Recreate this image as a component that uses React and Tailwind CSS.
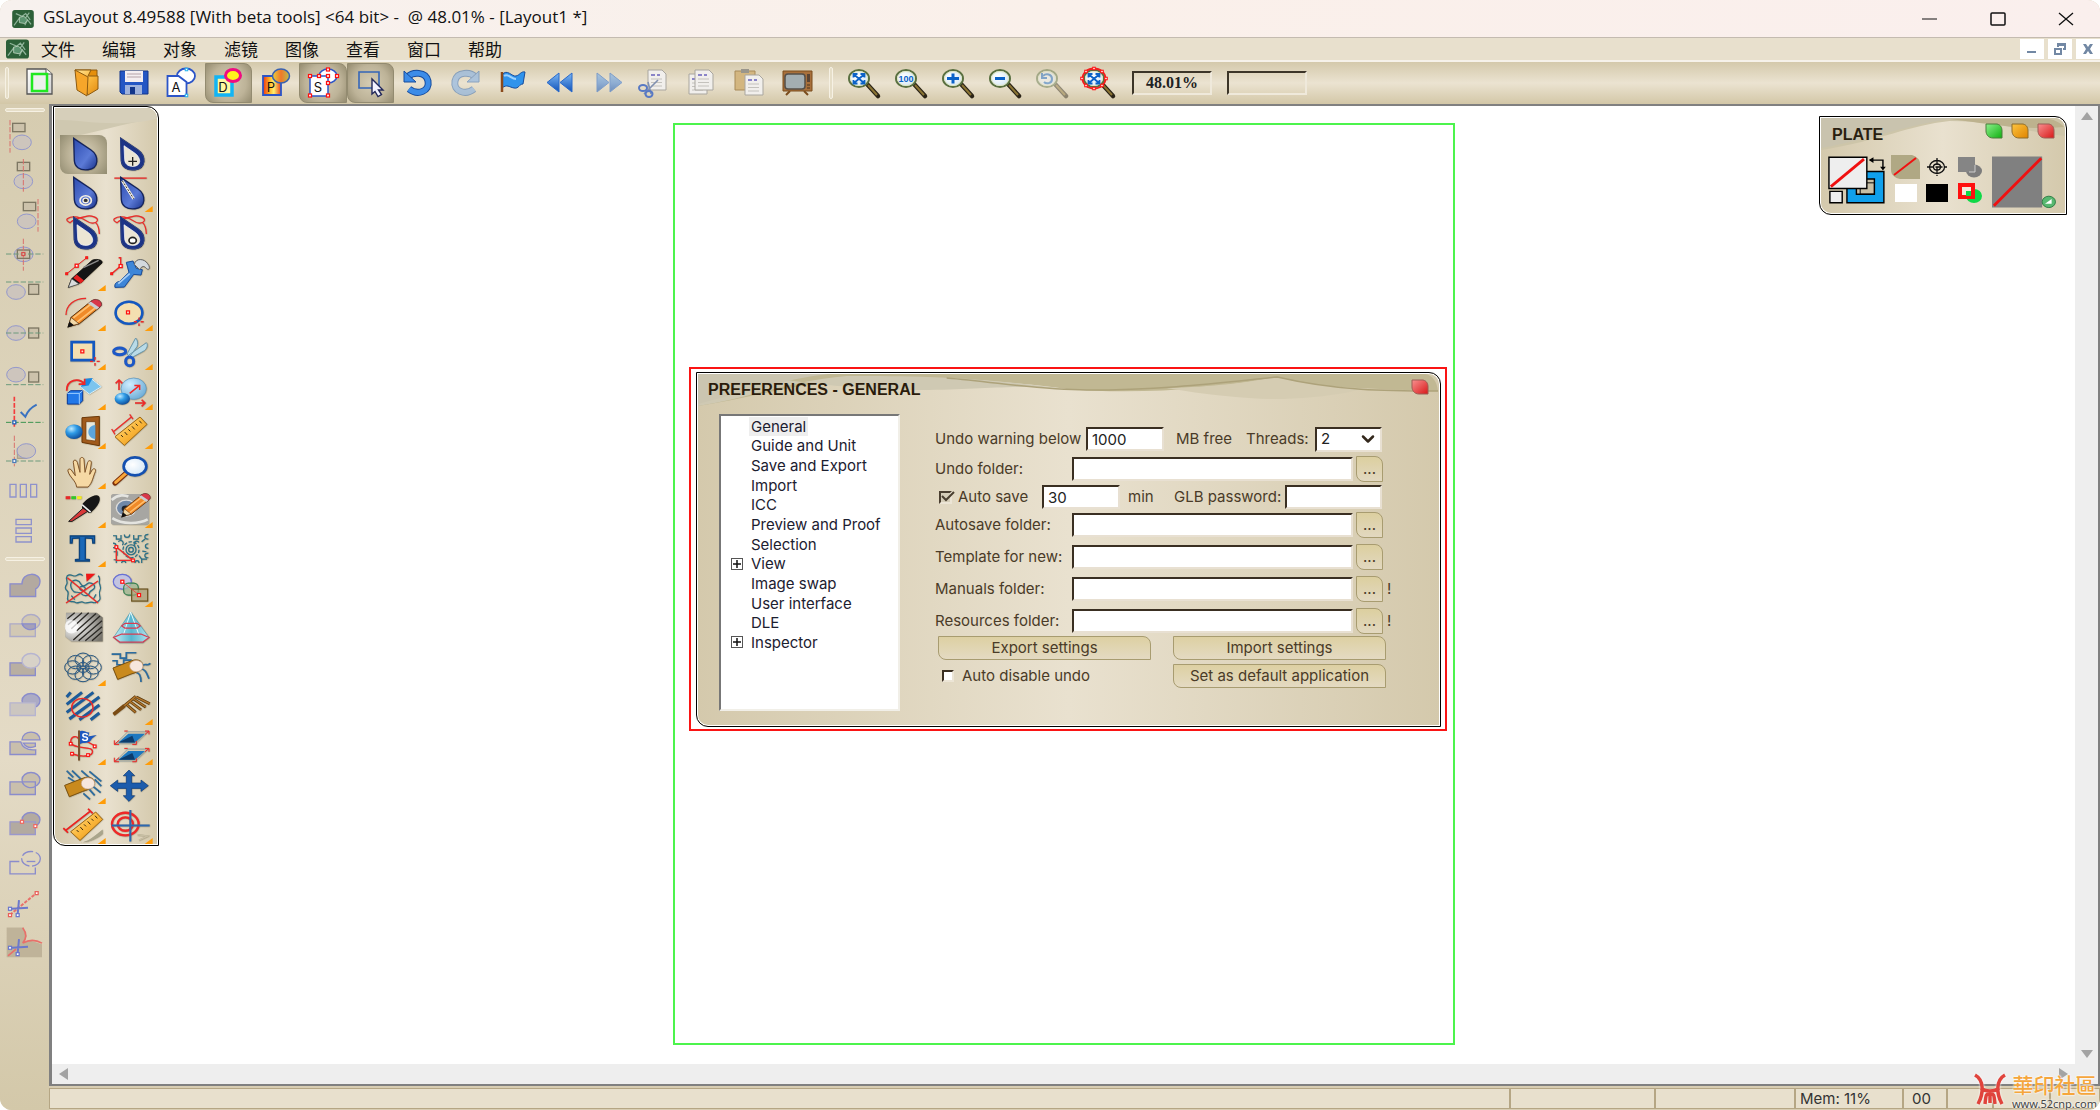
import { ChevronDown } from "lucide-react";
import clsx from "clsx";

const MENUS = ["文件", "编辑", "对象", "滤镜", "图像", "查看", "窗口", "帮助"];

/* ---------- shared icon parts ---------- */

const Handle = ({ x, y, s = 3, color = "#ff1010", fill = "#fff" }) => (
  <rect x={x - s / 2} y={y - s / 2} width={s} height={s} fill={fill} stroke={color} strokeWidth={s / 2.4} />
);

const Defs = () => (
  <svg width="0" height="0" className="absolute" aria-hidden="true">
    <defs>
      <linearGradient id="blue" x1="0" y1="0" x2="0" y2="1">
        <stop offset="0" stopColor="#7db8f5" />
        <stop offset="1" stopColor="#1152b8" />
      </linearGradient>
      <linearGradient id="drop" x1="0" y1="0" x2="1" y2="1">
        <stop offset="0" stopColor="#2c4bb0" />
        <stop offset="0.6" stopColor="#5b7ad6" />
        <stop offset="1" stopColor="#1a338c" />
      </linearGradient>
      <linearGradient id="fire" x1="0" y1="0" x2="1" y2="0">
        <stop offset="0" stopColor="#e8321a" />
        <stop offset="0.35" stopColor="#ffb020" />
        <stop offset="0.6" stopColor="#ffef70" />
        <stop offset="1" stopColor="#e8401a" />
      </linearGradient>
      <linearGradient id="ochre" x1="0" y1="0" x2="1" y2="0">
        <stop offset="0" stopColor="#e8d040" />
        <stop offset="0.5" stopColor="#f07828" />
        <stop offset="1" stopColor="#b8c050" />
      </linearGradient>
      <linearGradient id="gold" x1="0" y1="0" x2="1" y2="1">
        <stop offset="0" stopColor="#ffe9a0" />
        <stop offset="0.5" stopColor="#fbb83c" />
        <stop offset="1" stopColor="#e08a10" />
      </linearGradient>
      <linearGradient id="paper" x1="0" y1="0" x2="1" y2="1">
        <stop offset="0" stopColor="#ffffff" />
        <stop offset="1" stopColor="#d2d2d2" />
      </linearGradient>
      <radialGradient id="ball" cx="0.35" cy="0.3" r="0.8">
        <stop offset="0" stopColor="#bfeaff" />
        <stop offset="0.4" stopColor="#2f9be6" />
        <stop offset="1" stopColor="#08408e" />
      </radialGradient>
      <radialGradient id="paleBall" cx="0.35" cy="0.3" r="0.9">
        <stop offset="0" stopColor="#cfeeff" />
        <stop offset="1" stopColor="#5a9fce" />
      </radialGradient>
      <radialGradient id="lens" cx="0.4" cy="0.4" r="0.7">
        <stop offset="0" stopColor="#ffffff" />
        <stop offset="1" stopColor="#cfe4f5" />
      </radialGradient>
      <radialGradient id="metal" cx="0.25" cy="0.5" r="0.8">
        <stop offset="0" stopColor="#ffffff" />
        <stop offset="1" stopColor="#77746c" />
      </radialGradient>
      <linearGradient id="pyramid" x1="0" y1="0" x2="1" y2="0">
        <stop offset="0" stopColor="#c5eef5" />
        <stop offset="0.5" stopColor="#58b6cf" />
        <stop offset="1" stopColor="#b5e2ee" />
      </linearGradient>
    </defs>
  </svg>
);

/* ---------- top toolbar icons, 48x40 ---------- */

const Letter = ({ children }) => (
  <text x="19" y="29" textAnchor="middle" fontSize="13" fontFamily="Inter, sans-serif" fill="#111">
    {children}
  </text>
);

const SheetPair = ({ x = 0, y = 0 }) => (
  <g transform={`translate(${x} ${y})`}>
    <path d="M0 0h14l4 4v16H0z" fill="#f1efec" stroke="#a9a69f" />
    <path d="M3 5h4M9 5h3" stroke="#8a84c8" strokeWidth="2" />
    <path d="M3 9h11M3 12.5h11M3 16h11" stroke="#c4c2bd" />
  </g>
);

const Lens = ({ children, faded }) => (
  <g opacity={faded ? 0.45 : 1}>
    <path d="M27 21l11 12" stroke="#2b2417" strokeWidth="4.5" strokeLinecap="round" />
    <path d="M28 22l9 10" stroke="#8a7434" strokeWidth="2" />
    <ellipse cx="19" cy="15.5" rx="10" ry="8.5" fill="url(#lens)" stroke="#5a7040" strokeWidth="2" />
    <ellipse cx="19" cy="15.5" rx="8.5" ry="7" fill="none" stroke="#dfe6c0" />
    {children}
  </g>
);

const FitArrows = () => (
  <path
    d="M14.5 12l9 7.5M23.5 12l-9 7.5M13.5 14.5V11h4M24.5 14.5V11h-4M13.5 17v3.500h4M24.5 17v3.500h-4"
    fill="none"
    stroke="#0b62c8"
    strokeWidth="1.8"
  />
);

const TOOLBAR = [
  {
    name: "New",
    icon: (
      <>
        <path d="M12 6h19l6 5v20H12z" fill="url(#paper)" stroke="#555" strokeWidth="1.3" />
        <path d="M31 6v5h6" fill="#fff" stroke="#555" />
        <rect x="17" y="11" width="15" height="17" fill="#eef0ee" stroke="#21e821" strokeWidth="2.5" />
      </>
    ),
  },
  {
    name: "Open",
    icon: (
      <>
        <path d="M13 7h22v15l-6 3z" fill="#e58f0c" stroke="#8c5a10" />
        <path d="M13 7h16l-3 6h10v13l-10 6z" fill="url(#gold)" stroke="#8c5a10" />
        <path d="M13 7l13 7-1 19-10-6z" fill="#f6a62a" stroke="#8c5a10" />
      </>
    ),
  },
  {
    name: "Save",
    icon: (
      <>
        <path d="M10 8h28v23H12l-2-2z" fill="#2456c4" stroke="#12358a" />
        <path d="M15 8h18v11H15z" fill="#f4eef0" />
        <path d="M17 11h14M17 14h14" stroke="#c9bcc0" strokeWidth="1.5" />
        <path d="M15 22h17v9H15z" fill="#9fb2dc" />
        <path d="M20 24h5v7h-5z" fill="#12358a" />
      </>
    ),
  },
  {
    name: "Artwork mode",
    icon: (
      <>
        <ellipse cx="29" cy="13" rx="9" ry="7.5" fill="#fff" stroke="#2c55c8" strokeWidth="1.8" />
        <path d="M10.5 13h11l8 6v14h-19z" fill="#fff" stroke="#2c55c8" strokeWidth="1.8" />
        <Letter>A</Letter>
        <Handle x={29.5} y={6.5} s={2.5} color="#26b4f0" />
        <Handle x={29.5} y={32.5} s={2.5} color="#26b4f0" />
      </>
    ),
  },
  {
    name: "Design mode",
    pressed: true,
    icon: (
      <>
        <path d="M12 14h16v18H12z" fill="#fff9a0" stroke="#12b4f4" strokeWidth="3.5" />
        <Letter>D</Letter>
        <ellipse cx="29" cy="12.5" rx="7.5" ry="6" fill="#fff21c" stroke="#f00c80" strokeWidth="3" />
      </>
    ),
  },
  {
    name: "Preview mode",
    icon: (
      <>
        <path d="M11 13h18v19H11z" fill="url(#fire)" stroke="#2c55c8" strokeWidth="1.8" />
        <Letter>P</Letter>
        <ellipse cx="29" cy="13" rx="8.5" ry="7" fill="url(#ochre)" stroke="#3a62b0" strokeWidth="1.5" />
      </>
    ),
  },
  {
    name: "Selection mode",
    pressed: true,
    icon: (
      <>
        <ellipse cx="29" cy="13" rx="9" ry="7" fill="#fff" stroke="#2c55c8" strokeWidth="1.5" />
        <path d="M11 13h18v20H11z" fill="#fff" stroke="#2c55c8" strokeWidth="1.5" />
        <Letter>S</Letter>
        <Handle x={11} y={13} />
        <Handle x={20} y={13} />
        <Handle x={29} y={13} />
        <Handle x={38} y={13} />
        <Handle x={29} y={6.5} />
        <Handle x={29} y={20} />
        <Handle x={11} y={32.5} />
        <Handle x={29} y={32.5} />
      </>
    ),
  },
  {
    name: "Marquee",
    pressed: true,
    icon: (
      <>
        <path d="M12 9h20v16H12z" fill="none" stroke="#3566b8" strokeWidth="1.6" />
        <path d="M25 16v15l3-2.500 3 5 3.500-2-3-4.500h4.500z" fill="#f3f3ff" stroke="#23285a" strokeWidth="1.4" />
      </>
    ),
  },
  {
    name: "Undo",
    icon: (
      <>
        <path d="M14 14c4-5 18-6 20 4s-10 15-19 8" fill="none" stroke="#174c9c" strokeWidth="7" />
        <path d="M14 14c4-5 18-6 20 4s-10 15-19 8" fill="none" stroke="#3c8ce8" strokeWidth="5" />
        <path d="M10 8v11h12z" fill="#3c8ce8" stroke="#174c9c" />
      </>
    ),
  },
  {
    name: "Redo",
    icon: (
      <g opacity="0.6">
        <path d="M34 14c-4-5-18-6-20 4s10 15 19 8" fill="none" stroke="#4d7ab5" strokeWidth="7" />
        <path d="M34 14c-4-5-18-6-20 4s10 15 19 8" fill="none" stroke="#86b2e6" strokeWidth="5" />
        <path d="M38 8v11H26z" fill="#86b2e6" stroke="#4d7ab5" />
      </g>
    ),
  },
  {
    name: "Flag",
    icon: (
      <>
        <path d="M13 12c5-7 10 2 14 1s5-5 9-4l-2 12c-4 0-4 5-9 4s-7-4-12 0z" fill="#2f93ec" stroke="#174c9c" />
        <path d="M15 13c4-3 7 3 12 3" fill="none" stroke="#9cd2ff" strokeWidth="2" />
        <path d="M13 9v20" stroke="#8a4a1c" strokeWidth="2.5" />
      </>
    ),
  },
  {
    name: "Rewind",
    icon: <path d="M23 10v19L11 19.500zM36 10v19l-12-9.500z" fill="url(#blue)" stroke="#2a6acb" />,
  },
  {
    name: "Forward",
    icon: (
      <g opacity="0.55">
        <path d="M13 10v19l12-9.500zM26 10v19l12-9.500z" fill="url(#blue)" stroke="#2a6acb" />
      </g>
    ),
  },
  {
    name: "Cut",
    icon: (
      <>
        <SheetPair x={17} y={7} />
        <path d="M13 31l14-14M20 31l-3-12" stroke="#8090b0" strokeWidth="1.6" />
        <ellipse cx="12" cy="25" rx="4" ry="3" fill="none" stroke="#5879c4" strokeWidth="2" />
        <ellipse cx="18" cy="31" rx="3.5" ry="3" fill="none" stroke="#5879c4" strokeWidth="2" />
      </>
    ),
  },
  {
    name: "Copy",
    icon: (
      <>
        <SheetPair x={11} y={11} />
        <SheetPair x={17} y={7} />
      </>
    ),
  },
  {
    name: "Paste",
    icon: (
      <>
        <path d="M9 8h20v19H9z" fill="#d3b680" stroke="#a88a58" />
        <path d="M15 6h8v4h-8z" fill="#9a968c" />
        <SheetPair x={19} y={12} />
      </>
    ),
  },
  {
    name: "Monitor",
    icon: (
      <>
        <path d="M17 28l-4 4M31 28l4 4" stroke="#7a4c1c" strokeWidth="2" />
        <path d="M10 8h29v20H10z" fill="#a8703c" stroke="#7a4c1c" />
        <rect x="12" y="11" width="20" height="15" rx="3" fill="#a3aeb2" stroke="#55504a" strokeWidth="1.5" />
        <path d="M34 11h3v8h-3z" fill="#5a4434" />
        <path d="M34 22h3M34 25h3" stroke="#4b3520" />
      </>
    ),
  },
];

const ZOOMS = [
  { name: "Zoom to fit", icon: <Lens><FitArrows /></Lens> },
  {
    name: "Zoom 100",
    icon: (
      <Lens>
        <text x="19" y="19" textAnchor="middle" fontSize="9" fontWeight="700" fontFamily="Liberation Sans, sans-serif" fill="#0b62c8">
          100
        </text>
      </Lens>
    ),
  },
  { name: "Zoom in", icon: <Lens><path d="M19 10.5v10M13 15.5h12" stroke="#0b62c8" strokeWidth="3" /></Lens> },
  { name: "Zoom out", icon: <Lens><path d="M14 15.5h10" stroke="#0b62c8" strokeWidth="3" /></Lens> },
  {
    name: "Previous zoom",
    icon: (
      <Lens faded>
        <path d="M15 13c3-3 9-2 9 3s-6 5-8 3M14 10v5h5" fill="none" stroke="#0b62c8" strokeWidth="2" />
      </Lens>
    ),
  },
  {
    name: "Zoom selection",
    icon: (
      <Lens>
        <FitArrows />
        <ellipse cx="19" cy="15.5" rx="11.5" ry="10" fill="none" stroke="#f02020" strokeWidth="1.8" />
        <Handle x={19} y={5.5} s={2.5} />
        <Handle x={19} y={25.5} s={2.5} />
        <Handle x={7} y={15.5} s={2.5} />
        <Handle x={31} y={15.5} s={2.5} />
        <Handle x={11} y={8.5} s={2.5} />
        <Handle x={27} y={8.5} s={2.5} />
        <Handle x={11} y={22.5} s={2.5} />
        <Handle x={27} y={22.5} s={2.5} />
      </Lens>
    ),
  },
];

const ToolbarButton = ({ name, icon, pressed }) => (
  <button
    type="button"
    aria-label={name}
    aria-pressed={pressed}
    className={clsx(
      "h-10 w-full flex items-center justify-center rounded-tr-lg rounded-bl-lg",
      pressed && "border border-[#938b70] bg-[radial-gradient(circle,#d5ccb3_0%,#bdb398_60%,#958c70_100%)]"
    )}
  >
    <svg viewBox="0 0 48 40" className="h-10 w-12 shrink-0">
      {icon}
    </svg>
  </button>
);

const GripX = () => (
  <span className="h-8 w-1 shrink-0 rounded-full border border-[#f6f1e4] bg-[#e6dec8]" />
);

/* ---------- left sidebar icons, 147x118 ---------- */

const Shape = ({ children }) => (
  <g fill="#c9bfac" stroke="#8a8ccc" strokeWidth="4">
    {children}
  </g>
);

const Box = ({ x, y }) => (
  <rect x={x} y={y} width="37" height="25" fill="#ccc2ab" stroke="#7d7763" strokeWidth="4" />
);

const Ring = ({ x, y }) => (
  <ellipse cx={x} cy={y} rx="28" ry="22" fill="#cdc5bd" stroke="#9498cc" strokeWidth="3" />
);

const DashV = ({ x, y1 = 6, y2 = 104 }) => (
  <path d={`M${x} ${y1}V${y2}`} stroke="#d9706c" strokeWidth="3" strokeDasharray="16 5" />
);

const DashH = ({ y }) => <path d={`M18 ${y}H130`} stroke="#6c9a7c" strokeWidth="3" strokeDasharray="16 6" />;

const ALIGN = [
  { name: "Align left", icon: <><Box x={38} y={16} /><Ring x={66} y={73} /><DashV x={30} /></> },
  { name: "Align center", icon: <><Box x={52} y={16} /><Ring x={70} y={73} /><DashV x={70} /></> },
  { name: "Align right", icon: <><Box x={70} y={16} /><Ring x={80} y={73} /><DashV x={114} /></> },
  {
    name: "Center both",
    icon: (
      <>
        <Ring x={71} y={55} />
        <Box x={52} y={42} />
        <DashV x={70} y1={8} y2={104} />
        <DashH y={54} />
        <Handle x={70} y={54} s={9} color="#d9504c" fill="#ccc2ab" />
      </>
    ),
  },
  { name: "Align top", icon: <><DashH y={21} /><Ring x={48} y={51} /><rect x="86" y="28" width="30" height="30" fill="#ccc2ab" stroke="#7d7763" strokeWidth="4" /></> },
  { name: "Align middle", icon: <><Ring x={48} y={54} /><rect x="86" y="39" width="30" height="30" fill="#ccc2ab" stroke="#7d7763" strokeWidth="4" /><DashH y={54} /></> },
  { name: "Align bottom", icon: <><Ring x={48} y={62} /><rect x="86" y="54" width="30" height="30" fill="#ccc2ab" stroke="#7d7763" strokeWidth="4" /><DashH y={92} /></> },
  {
    name: "Snap",
    icon: (
      <>
        <path d="M43 8V100" stroke="#f43c3c" strokeWidth="5" strokeDasharray="14 5" />
        <path d="M18 85H130" stroke="#3c9450" strokeWidth="3" strokeDasharray="16 6" />
        <Handle x={43} y={85} s={9} color="#1c5fb8" />
        <path d="M62 54l14 14c6-16 18-28 34-36" fill="none" stroke="#3a72c0" strokeWidth="6" />
      </>
    ),
  },
  {
    name: "Snap to object",
    icon: (
      <>
        <rect x="52" y="46" width="28" height="30" fill="#c2b9a6" stroke="#a39b88" strokeWidth="3" />
        <Ring x={79} y={54} />
        <DashV x={43} y1={8} y2={100} />
        <DashH y={84} />
        <Handle x={43} y={84} s={9} color="#4c7cb8" />
      </>
    ),
  },
  { name: "Distribute columns", icon: <path d="M30 37h18v38H30zM61 37h18v38H61zM92 37h18v38H92z" fill="none" stroke="#8f92cc" strokeWidth="4" /> },
  { name: "Distribute rows", icon: <path d="M48 22h46v16H48zM48 48h46v16H48zM48 74h46v16H48z" fill="none" stroke="#8f92cc" strokeWidth="4" /> },
];

const BOOLEAN = [
  { name: "Union", icon: <Shape><path d="M30 50h36c0-38 56-36 54-6-1 14-6 18-13 21v23H30z" fill="#b3a9a0" /></Shape> },
  { name: "Intersect", icon: <Shape><g opacity="0.6"><path d="M30 50h76v38H30z" /><ellipse cx="93" cy="44" rx="27" ry="22" /></g><path d="M66 50h40v14c-16 8-34 2-40-14z" fill="#a5a0b8" /></Shape> },
  { name: "Subtract", icon: <Shape><path d="M30 50h76v38H30z" fill="#b9afa2" /><ellipse cx="93" cy="44" rx="27" ry="22" fill="#d8d2c8" stroke="#b6b4d0" /></Shape> },
  { name: "Subtract back", icon: <Shape><ellipse cx="93" cy="44" rx="27" ry="22" fill="#acabc4" /><path d="M30 50h76v38H30z" fill="#ccc6c0" stroke="#b6b4d0" /></Shape> },
  { name: "Exclude", icon: <Shape><path d="M30 50h32c6 20 24 26 45 24v14H30z" /><path d="M66 44c2-30 52-32 54 0zM70 54h36v10c-14 6-28 2-36-10z" /></Shape> },
  { name: "Divide", icon: <Shape><ellipse cx="93" cy="44" rx="27" ry="22" /><path d="M30 50h76v38H30z" /><path d="M66 50c6 16 26 22 40 14" fill="none" /></Shape> },
  {
    name: "Intersection points",
    icon: (
      <Shape>
        <ellipse cx="93" cy="44" rx="27" ry="22" fill="#b3aaa0" />
        <path d="M30 50h76v38H30z" fill="#b3aaa0" stroke="#9a98cc" />
        <Handle x={66} y={50} s={9} color="#ee6a62" />
        <Handle x={106} y={63} s={9} color="#ee6a62" />
      </Shape>
    ),
  },
  { name: "Outline", icon: <g fill="none" stroke="#8a8ccc" strokeWidth="4"><path d="M58 52H30v37h76V70" /><ellipse cx="93" cy="44" rx="28" ry="22" strokeDasharray="36 8" /><path d="M80 52h26" /></g> },
  {
    name: "Cut path",
    icon: (
      <>
        <path d="M30 92L108 28" stroke="#e8706a" strokeWidth="6" strokeDasharray="10 4" />
        <Handle x={110} y={27} s={9} color="#e8605a" />
        <Handle x={30} y={93} s={9} color="#e8605a" />
        <path d="M36 74l48-3M53 90l4-42" stroke="#6c78cc" strokeWidth="6" />
        <Handle x={30} y={74} s={9} color="#6c78cc" />
        <Handle x={53} y={93} s={9} color="#6c78cc" />
      </>
    ),
  },
  {
    name: "Cut shape",
    icon: (
      <>
        <path d="M20 13h50l10 26-12 20 26-6 32 10v39H20z" fill="#bfb399" />
        <path d="M68 14c12 16 14 30 0 46 18-10 40-10 58 0M24 98l24-20" fill="none" stroke="#e8706a" strokeWidth="5" />
        <path d="M36 74l48-3M53 90l4-42" stroke="#6c78cc" strokeWidth="6" />
        <Handle x={30} y={74} s={9} color="#6c78cc" />
        <Handle x={53} y={93} s={9} color="#6c78cc" />
      </>
    ),
  },
];

const SideButton = ({ name, icon }) => (
  <button type="button" aria-label={name} className="w-full min-h-0">
    <svg viewBox="0 0 147 118" className="h-full w-full">
      {icon}
    </svg>
  </button>
);

/* ---------- tool palette icons, 141x118 ---------- */

const DROP = "M41 10L92 44C118 62 118 100 84 104C58 107 44 94 43 76Z";

const HollowDrop = ({ children }) => (
  <>
    <path d={DROP} fill="#1d3488" stroke="#14245e" strokeWidth="4" />
    <path d={DROP} fill="none" stroke="#4a68c4" strokeWidth="1.5" />
    <path d="M51 32L86 56C104 72 102 92 80 94C60 95 54 84 53 74Z" fill="#ece5d4" stroke="#fff" strokeWidth="2" />
    {children}
  </>
);

const Lasso = () => (
  <path
    d="M22 14c16-12 44-4 60 8 10 8 26 6 30-2 4-10-20-16-30-14-20 4-46 12-52 20-8-4-12-8-8-12zM106 24c8 8 12 18 12 36"
    fill="none"
    stroke="#f02828"
    strokeWidth="3.5"
  />
);

const Pencil = () => (
  <>
    <path d="M25 101l8-28L94 24l26 18-62 50z" fill="#f08a28" stroke="#5c3410" strokeWidth="3" />
    <path d="M40 74l60-46M50 88l64-50" stroke="#ffc070" strokeWidth="5" />
    <path d="M88 28l12-8c14-4 28 6 24 18l-10 8z" fill="#d8384a" stroke="#5c2020" strokeWidth="2" />
    <path d="M84 31l8-6 26 18-8 6z" fill="#c9cdd2" />
    <path d="M25 101l8-28 24 19z" fill="#f2d9a8" stroke="#5c3410" strokeWidth="2" />
    <path d="M25 101l4-12 9 7z" fill="#111" stroke="#111" strokeWidth="4" />
  </>
);

const Cross = ({ x, y }) => (
  <path d={`M${x - 15} ${y}h9M${x + 5} ${y}h9M${x} ${y - 13}v8M${x} ${y + 5}v8`} stroke="#f02828" strokeWidth="4" />
);

const Ruler = () => (
  <>
    <path d="M24 77L99 18l21 22L52 103z" fill="url(#gold)" stroke="#a06a14" strokeWidth="3" />
    <path d="M42 72l6 6M53 63l8 9M64 55l6 6M75 46l8 9M86 38l6 6M97 29l7 8" stroke="#3c2c10" strokeWidth="3" />
  </>
);

const Finger = () => (
  <>
    <path d="M14 54l56-22c20-8 38 4 32 20-6 12-22 16-34 20L28 88z" fill="#c98a1e" stroke="#7c5210" strokeWidth="3" />
    <ellipse cx="84" cy="48" rx="20" ry="17" fill="#f7e7dd" stroke="#c9a890" strokeWidth="2" />
  </>
);

const Diamond = ({ y }) => (
  <>
    <path d={`M26 ${y + 36}L62 ${y}h62L86 ${y + 36}z`} fill="none" stroke="#8aa0a8" strokeWidth="2" />
    <path d={`M34 ${y + 32}L64 ${y + 6}h50L84 ${y + 32}z`} fill="#1c78c0" />
    <path d={`M34 ${y + 32}L76 ${y + 12}l8 20z`} fill="#0c3c6c" />
    <path
      d={`M22 ${y + 26}v12h14M22 ${y + 38}l14-12M114 ${y - 2}h12v10M126 ${y - 2}l-12 10M52 ${y - 2}h10M76 ${y + 38}h12v-10`}
      fill="none"
      stroke="#f02828"
      strokeWidth="3"
    />
  </>
);

const TOOLS = [
  { name: "Select", pressed: true, icon: <path d={DROP} fill="url(#drop)" stroke="#14245e" strokeWidth="4" /> },
  { name: "Add select", icon: <HollowDrop><path d="M77 66v26M64 79h26" stroke="#222" strokeWidth="4" /></HollowDrop> },
  {
    name: "Point select",
    icon: (
      <>
        <path d={DROP} fill="url(#drop)" stroke="#14245e" strokeWidth="4" />
        <ellipse cx="77" cy="79" rx="17" ry="14" fill="none" stroke="#f4efe2" strokeWidth="5" />
        <ellipse cx="77" cy="79" rx="8" ry="7" fill="#333" stroke="#f4efe2" strokeWidth="4" />
      </>
    ),
  },
  {
    name: "Slice select",
    more: true,
    icon: (
      <>
        <path d="M22 12h97" stroke="#f02828" strokeWidth="4" />
        <path d={DROP} fill="url(#drop)" stroke="#14245e" strokeWidth="4" />
        <path d="M46 20l34 54" stroke="#f4efe2" strokeWidth="8" />
        <path d="M46 20l34 54" stroke="#333" strokeWidth="3" strokeDasharray="6 4" />
      </>
    ),
  },
  { name: "Lasso", icon: <><Lasso /><HollowDrop /></> },
  {
    name: "Lasso points",
    icon: (
      <>
        <Lasso />
        <HollowDrop>
          <ellipse cx="77" cy="79" rx="11" ry="9" fill="#fff" stroke="#222" strokeWidth="5" />
        </HollowDrop>
      </>
    ),
  },
  {
    name: "Pen",
    more: true,
    icon: (
      <>
        <path d="M20 62L80 14" stroke="#f02828" strokeWidth="3" />
        <Handle x={20} y={62} s={6} fill="#f02828" />
        <Handle x={50} y={38} s={9} />
        <Handle x={80} y={14} s={6} fill="#f02828" />
        <path d="M25 103l10-26L96 22c8-5 34-4 30 8L64 88z" fill="#151515" stroke="#000" strokeWidth="2" />
        <path d="M70 44l46-22" stroke="#8c8c8c" strokeWidth="4" />
        <path d="M50 64l22 18-10 9-22-16z" fill="#e42020" />
        <path d="M25 103l10-26 22 16z" fill="#d9dcdc" stroke="#444" strokeWidth="2" />
      </>
    ),
  },
  {
    name: "Wrench",
    icon: (
      <>
        <path d="M14 62l27-23V14h-6" fill="none" stroke="#f02828" strokeWidth="4" />
        <Handle x={14} y={62} s={6} fill="#f02828" />
        <Handle x={41} y={39} s={9} />
        <path d="M24 103c-2-12 4-16 14-18L66 58l-8-30 20-4 10 22 18 4-4 16-22-2-28 38z" fill="#3e86d8" stroke="#174c9c" strokeWidth="3" />
        <path d="M34 92l34-30" stroke="#a8d0f8" strokeWidth="5" />
        <path d="M82 34c4-20 30-18 40-2 10 12 4 22-4 14-6-8-14-8-20 4z" fill="#d3d9de" stroke="#666" strokeWidth="3" />
      </>
    ),
  },
  { name: "Freehand", more: true, icon: <><path d="M18 66c0-30 24-50 60-50" fill="none" stroke="#f02828" strokeWidth="3.5" /><Pencil /></> },
  {
    name: "Ellipse",
    more: true,
    icon: (
      <>
        <ellipse cx="66" cy="59" rx="40" ry="33" fill="#f4dfb0" stroke="#1458c0" strokeWidth="8" />
        <Handle x={63} y={58} s={9} fill="#f8e8c8" />
        <Cross x={96} y={86} />
      </>
    ),
  },
  {
    name: "Rectangle",
    more: true,
    icon: (
      <>
        <path d="M35 30h66v54H35z" fill="#f4dfb0" stroke="#1458c0" strokeWidth="8" />
        <Handle x={67} y={58} s={9} fill="#f8e8c8" />
        <Cross x={105} y={88} />
      </>
    ),
  },
  {
    name: "Scissors",
    more: true,
    icon: (
      <>
        <path d="M60 66L86 18c6 6 8 18 4 26L68 74zM64 70l54-38c6 6 2 18-6 24L72 78z" fill="#b9dbe8" stroke="#6c98ac" strokeWidth="3" />
        <ellipse cx="38" cy="58" rx="18" ry="10" fill="none" stroke="#1c58c8" strokeWidth="9" />
        <ellipse cx="68" cy="88" rx="12" ry="13" fill="none" stroke="#1c58c8" strokeWidth="9" />
      </>
    ),
  },
  {
    name: "Rotate",
    more: true,
    icon: (
      <>
        <path d="M60 44l34-24 30 24-36 22z" fill="#7cc4ee" stroke="#d8f0fc" strokeWidth="3" />
        <path d="M76 20l22-2-12 22-24 4z" fill="#1c88e0" />
        <path d="M22 64l10-8h36v30l-10 10H22z" fill="#2278e8" stroke="#0c3c9c" strokeWidth="3" />
        <path d="M22 64h36v32M58 64l10-8" fill="none" stroke="#9cccff" strokeWidth="3" />
        <path d="M20 56c0-34 36-40 54-20M74 20v16H56" fill="none" stroke="#f02828" strokeWidth="5" />
      </>
    ),
  },
  {
    name: "Scale",
    more: true,
    icon: (
      <>
        <ellipse cx="80" cy="50" rx="38" ry="32" fill="url(#paleBall)" stroke="#5c94bc" strokeWidth="2" />
        <ellipse cx="46" cy="80" rx="23" ry="18" fill="url(#ball)" />
        <path d="M36 54V24M26 34l10-10 10 10M68 64l30-24M82 40h16v14M84 93h30M104 83l10 10-10 10" fill="none" stroke="#f02828" strokeWidth="4.5" />
      </>
    ),
  },
  {
    name: "Mirror",
    more: true,
    icon: (
      <>
        <path d="M66 20l52-4v88l-52-10z" fill="#a05a1c" stroke="#6c3808" strokeWidth="3" />
        <path d="M78 32h28v58l-28-4z" fill="#e8e8dc" stroke="#6c3808" strokeWidth="2" />
        <path d="M106 42c-28 2-28 40 0 42z" fill="#5ca4dc" />
        <ellipse cx="42" cy="62" rx="26" ry="22" fill="url(#ball)" />
      </>
    ),
  },
  {
    name: "Measure",
    more: true,
    icon: (
      <>
        <path d="M19 62L74 17M14 54l10 16M68 10l10 14" stroke="#f02828" strokeWidth="3.5" />
        <Ruler />
      </>
    ),
  },
  {
    name: "Hand",
    more: true,
    icon: (
      <path
        d="M50 108c-2-20-22-30-26-48-2-8 8-8 12 0l10 14-6-40c-1-9 9-9 12 0l8 30V26c0-9 11-9 12 0l3 38 8-30c3-8 12-6 11 2l-5 34 8-14c5-6 12-2 9 6-8 18-8 32-22 46z"
        fill="#f6d9a4"
        stroke="#84582c"
        strokeWidth="3"
      />
    ),
  },
  {
    name: "Zoom",
    icon: (
      <>
        <path d="M60 64L24 96" stroke="#7c2c08" strokeWidth="15" strokeLinecap="round" />
        <path d="M60 64L26 94" stroke="#f8a83c" strokeWidth="9" strokeLinecap="round" />
        <ellipse cx="84" cy="46" rx="34" ry="27" fill="url(#lens)" stroke="#1450b0" strokeWidth="8" />
      </>
    ),
  },
  {
    name: "Eyedropper",
    more: true,
    icon: (
      <>
        <path d="M17 23h14" stroke="#e82828" strokeWidth="9" />
        <path d="M34 23h14" stroke="#30c828" strokeWidth="9" />
        <path d="M51 23h14" stroke="#f4ec20" strokeWidth="9" />
        <path d="M26 94L74 50l12 12-50 32z" fill="#d83838" stroke="#222" strokeWidth="3" />
        <path d="M66 44c8-14 40-36 50-26s-4 34-20 46c-4 6-10 6-14 0L66 54z" fill="#161616" />
        <path d="M66 44l26 22" stroke="#eee" strokeWidth="5" />
      </>
    ),
  },
  {
    name: "Retouch",
    more: true,
    icon: (
      <>
        <rect x="12" y="12" width="114" height="92" rx="8" fill="#a7a6a2" />
        <path d="M14 30c20-18 40-16 50-10M16 84c30 20 80 18 106 4" fill="none" stroke="#e4e4e0" strokeWidth="8" />
        <ellipse cx="58" cy="54" rx="30" ry="24" fill="#7088a8" stroke="#dcdcdc" strokeWidth="4" />
        <ellipse cx="56" cy="56" rx="12" ry="10" fill="#1c2430" />
        <g transform="translate(24 -6) scale(0.85)"><Pencil /></g>
      </>
    ),
  },
  {
    name: "Text",
    more: true,
    icon: (
      <text x="67" y="95" textAnchor="middle" fontSize="114" fontWeight="700" fontFamily="Liberation Serif, serif" fill="#1a68b8" stroke="#0d447f" strokeWidth="4">
        T
      </text>
    ),
  },
  {
    name: "Pattern",
    icon: (
      <>
        <g fill="none" stroke="#28708a" strokeWidth="3.5">
          <path d="M18 20h10v10h14V18M52 16c0 12 16 12 16 0M80 18v12h14V20h10M124 16c-14 0-14 14 0 14M18 42c12 0 12 14 0 14M124 44c-12 0-12 14 0 14M20 68h10v12M124 72c-14 0-14 14 0 14M104 102V90h16M44 102c0-8 12-8 12 0M84 102c0-10 12-10 12 0M20 92h8v10" />
          <path d="M34 38c8-10 20 2 12 10M96 40c-8-10-20 2-12 10M104 38l10-8M106 66l12 2M96 80l8 10" />
          <circle cx="72" cy="62" r="24" strokeDasharray="10 5" />
          <circle cx="72" cy="62" r="15" />
          <circle cx="72" cy="62" r="7" />
        </g>
        <path d="M28 54v40h50z" fill="none" stroke="#f02828" strokeWidth="4" />
        <Handle x={28} y={54} s={8} />
        <Handle x={78} y={94} s={8} />
      </>
    ),
  },
  {
    name: "Remove pattern",
    icon: (
      <>
        <g fill="none" stroke="#28708a" strokeWidth="3.5">
          <path d="M22 20c10-8 18 4 26 0s14-8 20 0M22 20c-8 10 4 18-2 26s-6 14 2 20-4 20 2 28 16 0 22 6 18-6 24 0 20-4 28 0 20-4 22-10-6-18 0-26-2-16-2-24 4-16-4-20" />
          <path d="M34 40c10-12 24-6 28 4s14 6 20 0 22 0 22 10-14 8-16 18-18 10-24 2-16-2-22-6-14-18-8-28zM58 56c4-6 16-6 18 2s-14 10-18-2zM34 80l10 12M108 76l-8 14" />
        </g>
        <path d="M22 26l92 76M114 36L18 102" stroke="#f02828" strokeWidth="4" />
        <path d="M78 14h28L80 38z" fill="#f01818" />
      </>
    ),
  },
  {
    name: "Blend",
    more: true,
    icon: (
      <>
        <ellipse cx="46" cy="38" rx="27" ry="22" fill="#c3c4e0" stroke="#6870d8" strokeWidth="3.5" />
        <rect x="50" y="42" width="44" height="36" rx="14" fill="#a9c4a0" fillOpacity="0.7" stroke="#348050" strokeWidth="3.5" />
        <rect x="74" y="60" width="48" height="36" fill="#b8aa80" fillOpacity="0.6" stroke="#6c5420" strokeWidth="3.5" />
        <path d="M46 38l50 40" stroke="#f04040" strokeWidth="2.5" />
        <Handle x={46} y={38} s={9} />
        <Handle x={96} y={78} s={9} />
      </>
    ),
  },
  {
    name: "Hatch shading",
    icon: (
      <>
        <path d="M18 14h92l18 14v72h-94l-18-14z" fill="url(#metal)" />
        <g stroke="#2c2a26" strokeWidth="4">
          <path d="M22 32l22-18M24 50l42-36M34 62l52-48M50 68l58-52M40 96l80-72M56 98l70-60M76 98l50-42M96 98l30-26" />
        </g>
        <ellipse cx="34" cy="56" rx="20" ry="20" fill="#fff" opacity="0.75" />
      </>
    ),
  },
  {
    name: "Extrude",
    icon: (
      <>
        <path d="M71 12L20 88l18 16h70l18-16z" fill="url(#pyramid)" stroke="#4c9cb4" strokeWidth="2" />
        <path d="M71 12L50 78M71 12l24 66" stroke="#e8fafc" strokeWidth="3" />
        <path d="M20 88l24-10h58l24 10-18 14H38zM54 46h36l10 8-10 6H54l-10-6z" fill="none" stroke="#d83c50" strokeWidth="3.5" />
      </>
    ),
  },
  {
    name: "Guilloche",
    more: true,
    icon: (
      <g fill="none" stroke="#2c5c88" strokeWidth="3">
        <ellipse cx="69" cy="35" rx="24" ry="20" />
        <ellipse cx="69" cy="81" rx="24" ry="20" />
        <ellipse cx="38" cy="58" rx="24" ry="20" />
        <ellipse cx="100" cy="58" rx="24" ry="20" />
        <ellipse cx="47" cy="42" rx="24" ry="20" />
        <ellipse cx="91" cy="42" rx="24" ry="20" />
        <ellipse cx="47" cy="74" rx="24" ry="20" />
        <ellipse cx="91" cy="74" rx="24" ry="20" />
        <ellipse cx="69" cy="58" rx="18" ry="15" />
      </g>
    ),
  },
  {
    name: "Smudge lines",
    icon: (
      <>
        <path d="M14 18h26v12h18V14h30M16 38h14v12h20V36h24M88 74c14 0 14 20 14 28M100 62c16 0 20 16 26 30M108 52c8-8 12 4 22-6" fill="none" stroke="#2c6ca0" strokeWidth="5" />
        <g transform="translate(4 6)"><Finger /></g>
      </>
    ),
  },
  {
    name: "Stripe warp",
    icon: (
      <>
        <path d="M20 30l12-14M20 52l46-36M20 76l80-60M28 96l90-66M58 98l60-44M92 98l26-20" stroke="#1c5c9c" strokeWidth="9" />
        <ellipse cx="67" cy="62" rx="32" ry="28" fill="none" stroke="#f02828" strokeWidth="4" />
      </>
    ),
  },
  {
    name: "Comb",
    more: true,
    icon: (
      <>
        <path d="M20 82L86 28M60 54l26 22M70 44l32 24M80 36l36 24M88 30l40 20" stroke="#5c380c" strokeWidth="8" />
        <path d="M20 82L86 28M60 54l26 22M70 44l32 24M80 36l36 24M88 30l40 20" stroke="#b4782c" strokeWidth="4" />
        <path d="M20 82L52 56" stroke="#7c4c14" strokeWidth="11" />
      </>
    ),
  },
  {
    name: "Vector flag",
    more: true,
    icon: (
      <>
        <path d="M32 46c0-22 20-20 24-10M32 46c4 16 40 14 54 18 14 2 18 18-4 22-20 4-36-2-46-6M60 90c-10-8-24-10-24-4M82 44l22 12" fill="none" stroke="#f02828" strokeWidth="4" />
        <path d="M58 14c10-8 20 4 30 2l-4 12 26-4-14 10c-10 20-24 8-38 18z" fill="#1c58c0" />
        <path d="M57 10v90" stroke="#7c5430" strokeWidth="6" />
        <text x="75" y="43" textAnchor="middle" fontSize="32" fontWeight="700" fontFamily="Liberation Sans, sans-serif" fill="#fff">
          S
        </text>
        <Handle x={32} y={50} s={8} />
        <Handle x={104} y={58} s={8} />
        <Handle x={36} y={80} s={8} />
        <Handle x={84} y={84} s={8} />
      </>
    ),
  },
  { name: "Skew", more: true, icon: <><Diamond y={14} /><Diamond y={66} /></> },
  {
    name: "Smudge hatch",
    more: true,
    icon: (
      <>
        <path d="M20 14l20 20M36 14l30 28M64 14l34 30M88 16l36 30M24 34l28 18M88 70l16 18M98 60l24 20M70 82l20 18M104 40l20 20" stroke="#2c6ca0" strokeWidth="5" />
        <g transform="translate(0 4)"><Finger /></g>
      </>
    ),
  },
  {
    name: "Move",
    icon: (
      <path
        d="M66 12l17 17H74v22h28V42l22 17-22 17V67H74v22h9l-17 17-17-17h9V67H32v9L10 59l22-17v9h26V29h-9z"
        fill="#1c5cac"
        stroke="#0c3c7c"
        strokeWidth="2"
      />
    ),
  },
  {
    name: "Ruler",
    more: true,
    icon: (
      <>
        <path d="M60 110c20-2 40-16 68-40v14c-18 14-34 24-68 26z" fill="#a9a58c" />
        <g transform="translate(8 0)"><Ruler /></g>
        <path d="M16 74l74-58M10 66l14 14M84 8l14 14" stroke="#f02020" strokeWidth="5" />
      </>
    ),
  },
  {
    name: "Target",
    more: true,
    icon: (
      <>
        <ellipse cx="55" cy="54" rx="40" ry="34" fill="none" stroke="#f02828" strokeWidth="7" />
        <ellipse cx="55" cy="54" rx="23" ry="20" fill="none" stroke="#f02828" strokeWidth="7" />
        <path d="M70 12v94M14 58h114" stroke="#2c68b0" strokeWidth="6" />
        <path d="M92 86l30 4-26 12" fill="none" stroke="#c8bfa4" strokeWidth="4" />
      </>
    ),
  },
];

const ToolButton = ({ name, icon, pressed, more }) => (
  <button
    type="button"
    aria-label={name}
    aria-pressed={pressed}
    className={clsx(
      "min-h-0 rounded-tr-lg rounded-bl-lg",
      pressed && "bg-[radial-gradient(circle,#ddd5bf_0%,#b8af94_55%,#918b70_100%)]"
    )}
  >
    <svg viewBox="0 0 141 118" className="h-full w-full">
      <g className="drop-shadow-[1px_1px_1px_rgba(90,80,50,0.5)]">{icon}</g>
      {more && <path d="M113 114l24-18v18z" fill="#ff9c08" />}
    </svg>
  </button>
);

/* ---------- floating windows ---------- */

const LEAVES = {
  green: ["#8cf08c", "#10b010", "#4c7c3c"],
  orange: ["#fcc440", "#e08400", "#8c6c2c"],
  red: ["#f89090", "#d81818", "#9c5c54"],
};

const Leaf = ({ color, name }) => {
  const [light, dark, edge] = LEAVES[color];
  return (
    <button type="button" aria-label={name} className="block h-4 w-[18px]">
      <svg viewBox="0 0 18 16" className="h-full w-full">
        <defs>
          <linearGradient id={`leaf-${color}`} x1="0" y1="0" x2="1" y2="1">
            <stop offset="0" stopColor={light} />
            <stop offset="1" stopColor={dark} />
          </linearGradient>
        </defs>
        <path d="M1 1h11c4 1 5 4 5 7v7H8C3 15 1 11 1 8z" fill={`url(#leaf-${color})`} stroke={edge} />
      </svg>
    </button>
  );
};

const Panel = ({ className, children }) => (
  <div
    className={clsx(
      "border border-black rounded-tr-xl rounded-bl-xl overflow-hidden shadow-[inset_0_0_0_1px_#fff] bg-linear-to-r from-[#d4c9ac] via-[#e9e1cf] to-[#d4c9ac]",
      className
    )}
  >
    {children}
  </div>
);

const ToolPalette = () => (
  <Panel className="absolute left-px top-0 h-[740px] w-[106px] pt-7 pr-1 pl-1.5">
    <svg viewBox="0 0 104 30" preserveAspectRatio="none" className="absolute left-0 top-0 h-8 w-full">
      <path d="M1 1h92c6 1 9 5 10 10C70 14 40 26 1 30z" fill="#cfc8b0" />
      <path d="M1 1h92c6 1 9 5 10 10C60 20 30 12 1 12z" fill="#d6cfba" />
    </svg>
    <div className="relative grid h-full grid-cols-2 grid-rows-18">
      {TOOLS.map((tool) => (
        <ToolButton key={tool.name} {...tool} />
      ))}
    </div>
  </Panel>
);

const PlatePanel = () => (
  <Panel className="absolute right-2 top-[10px] h-[99px] w-[248px] px-2 pt-1.5">
    <svg viewBox="0 0 247 34" preserveAspectRatio="none" className="absolute left-0 top-0 h-[34px] w-full">
      <path d="M1 1h236c6 2 9 6 9 18C210 16 180 4 130 4 90 8 60 24 1 33z" fill="#cdc5a9" />
      <path d="M1 1h140C100 4 60 20 1 31z" fill="#c9c3ae" />
      <path d="M130 2h100c6 1 12 4 15 8-40 4-80-4-115-8z" fill="#bdb28e" />
    </svg>
    <div className="relative flex items-start justify-between pl-1 pr-0.5">
      <h2 className="font-[Liberation_Sans,sans-serif] text-base leading-6 font-bold text-[#2a1f10]">PLATE</h2>
      <div className="flex gap-2 pr-px">
        <Leaf color="green" name="Collapse plate" />
        <Leaf color="orange" name="Dock plate" />
        <Leaf color="red" name="Close plate" />
      </div>
    </div>
    <div className="relative mt-[7px] flex items-start">
      <svg viewBox="0 0 62 52" className="h-[52px] w-[62px]">
        <path d="M20 17h39v33H20z" fill="#10a0ec" stroke="#000" strokeWidth="1.5" />
        <path d="M30 25h19v16H30z" fill="#c8bfa6" stroke="#000" strokeWidth="1.5" />
        <path d="M34 29h15v12H34z" fill="none" stroke="#000" strokeWidth="1" />
        <path d="M1 2h40v33H1z" fill="#eee" stroke="#000" strokeWidth="1.5" />
        <path d="M3 33L38 4" stroke="#f01010" strokeWidth="3" />
        <path d="M2 38h13v12H2z" fill="#eee" stroke="#000" strokeWidth="1.5" />
        <path d="M46 5h12v9" fill="none" stroke="#000" strokeWidth="1.5" />
        <path d="M48 2v6l-5-3zM55 12h6l-3 4z" fill="#000" />
      </svg>
      <div className="ml-1 grid grid-cols-[31px_31px_35px] grid-rows-[26px_26px] items-center justify-items-center">
        <svg viewBox="0 0 30 26" className="h-[26px] w-[30px]">
          <path d="M0 1h21c5 2 8 4 8 9v15H9c-5-1-9-4-9-9z" fill="#b0a884" />
          <path d="M3 21L25 4" stroke="#f01010" strokeWidth="2" />
        </svg>
        <svg viewBox="0 0 22 20" className="h-5 w-[22px]" fill="none" stroke="#111" strokeWidth="1.3">
          <ellipse cx="11" cy="10" rx="7.5" ry="6.5" />
          <ellipse cx="11" cy="10" rx="3.5" ry="3" />
          <path d="M11 1v18M1 10h20" strokeDasharray="7 1.5" />
        </svg>
        <svg viewBox="0 0 26 22" className="h-[22px] w-[26px]">
          <ellipse cx="17" cy="15" rx="8" ry="6.5" fill="#7c7c7c" />
          <path d="M1 1h17v15H1z" fill="#858585" />
          <path d="M12 16h6V9" fill="none" stroke="#ccc" />
        </svg>
        <span className="h-[18px] w-[22px] bg-white" />
        <span className="h-[18px] w-[22px] bg-black" />
        <svg viewBox="0 0 26 22" className="h-[22px] w-[26px]">
          <ellipse cx="17" cy="14" rx="8" ry="7" fill="#10d848" />
          <path d="M3 3h13v12H3z" fill="#f4e8dc" stroke="#ff1010" strokeWidth="4" />
          <path d="M9 9h5v5h-5z" fill="#10d848" />
        </svg>
      </div>
      <svg viewBox="0 0 70 56" className="ml-1 h-14 w-[70px]">
        <path d="M0 1h53v54H0z" fill="#808080" />
        <path d="M2 53L52 3" stroke="#f01010" strokeWidth="3" />
        <ellipse cx="60" cy="49" rx="7" ry="6" fill="#58b870" stroke="#2c7c44" />
        <path d="M56 51l7-5v5z" fill="#fff" />
      </svg>
    </div>
  </Panel>
);

const SECTIONS = [
  { label: "General", active: true },
  { label: "Guide and Unit" },
  { label: "Save and Export" },
  { label: "Import" },
  { label: "ICC" },
  { label: "Preview and Proof" },
  { label: "Selection" },
  { label: "View", expandable: true },
  { label: "Image swap" },
  { label: "User interface" },
  { label: "DLE" },
  { label: "Inspector", expandable: true },
];

const inputStyle =
  "h-6 border-2 border-t-[#3a2f22] border-l-[#3a2f22] border-r-[#e8e0d2] border-b-[#e8e0d2] bg-white px-1 outline-none text-[#222]";

const actionStyle =
  "h-6 w-[213px] rounded-tr-lg rounded-bl-lg border border-[#a89c70] bg-linear-to-b from-[#ddd0a2] to-[#e4dac2]";

const FolderRow = ({ id, label, warn, className }) => (
  <div className={clsx("flex h-[26px] items-center", className)}>
    <label htmlFor={id} className="w-[137px]">
      {label}
    </label>
    <input id={id} type="text" defaultValue="" className={clsx(inputStyle, "w-[281px]")} />
    <button
      type="button"
      aria-label={`Browse ${label}`}
      className="ml-[3px] h-[26px] w-[27px] rounded-tr-lg rounded-bl-lg border border-[#a89c70] bg-linear-to-b from-[#dccf9f] to-[#e2d8c0] leading-5"
    >
      ...
    </button>
    {warn && <span className="ml-1">!</span>}
  </div>
);

const PreferencesDialog = () => (
  <Panel className="relative flex h-[355px] w-[745px]">
    <svg viewBox="0 0 744 40" preserveAspectRatio="none" className="absolute left-0 top-0 h-10 w-full">
      <path d="M1 1h728c7 1 12 7 13 17C690 16 620 16 581 4 520 16 440 22 370 16 330 10 250 4 200 4 120 4 60 24 1 33z" fill="#c1b893" />
      <path d="M1 1h40c80 10 120 16 184 16 60 0 90-6 145-1-60-8-120-14-220-13C90 8 50 26 1 33z" fill="#cfc9b3" />
      <path d="M1 1h130C90 6 50 18 1 31z" fill="#cbc5b0" />
      <path d="M470 15C520 14 560 8 581 4c30 8 60 10 85 12-30 8-70 10-85 10-30 0-70-4-111-11z" fill="#d5ccb2" />
      <path d="M250 5c50 4 90 12 140 12 80 0 140-8 191-13 60 14 110 14 161 14" fill="none" stroke="#ada27a" strokeWidth="1.5" />
    </svg>
    <div className="relative w-[220px] shrink-0 pl-[11px]">
      <h2 className="pt-[5px] font-[Liberation_Sans,sans-serif] text-base leading-6 font-bold whitespace-nowrap text-[#2a1c0c]">
        PREFERENCES - GENERAL
      </h2>
      <ul className="mt-3 ml-[11px] h-[297px] w-[181px] border-2 border-t-[#777] border-l-[#777] border-r-[#f1efe8] border-b-[#f1efe8] bg-white text-[#1c2030]">
        {SECTIONS.map(({ label, active, expandable }, i) => (
          <li key={label} className={clsx("flex items-center", i % 3 === 1 ? "h-[19px]" : "h-5")}>
            <span className="flex w-7 shrink-0 justify-center pl-1">
              {expandable && (
                <button type="button" aria-label={`Expand ${label}`} className="size-3 border border-[#555] bg-white">
                  <svg viewBox="0 0 10 10" className="size-full">
                    <path d="M5 1v8M1 5h8" stroke="#111" strokeWidth="1.5" />
                  </svg>
                </button>
              )}
            </span>
            <a href="#" className={clsx("px-0.5 leading-[19px]", active && "bg-[#eee]")}>
              {label}
            </a>
          </li>
        ))}
      </ul>
    </div>
    <form className="relative ml-[18px] flex flex-col pt-[53px] text-[#4a3b28]">
      <div className="flex h-[26px] items-center">
        <label htmlFor="undo-limit" className="w-[151px]">
          Undo warning below
        </label>
        <input id="undo-limit" type="text" defaultValue="1000" className={clsx(inputStyle, "w-[78px]")} />
        <span className="ml-3 w-[70px]">MB free</span>
        <label htmlFor="threads" className="w-[69px]">
          Threads:
        </label>
        <span className="relative">
          <select id="threads" defaultValue="2" className={clsx(inputStyle, "h-[25px] w-[67px] appearance-none")}>
            <option>1</option>
            <option>2</option>
            <option>4</option>
          </select>
          <ChevronDown strokeWidth={3} className="pointer-events-none absolute right-1 top-0.5 size-5 text-[#33281c]" />
        </span>
      </div>
      <FolderRow id="undo-folder" label="Undo folder:" className="mt-1" />
      <div className="mt-0.5 flex h-[26px] items-center">
        <span className="relative ml-1 mr-1.5 flex">
          <input
            id="auto-save"
            type="checkbox"
            defaultChecked
            className="size-[13px] appearance-none border-2 border-t-[#4a3f30] border-l-[#4a3f30] border-r-[#ece5d6] border-b-[#ece5d6] bg-[#d5cdb8]"
          />
          <svg viewBox="0 0 16 12" className="pointer-events-none absolute left-0 top-0 h-3 w-4">
            <path d="M3 5l4 4 8-8" fill="none" stroke="#4a3f30" strokeWidth="2" />
          </svg>
        </span>
        <label htmlFor="auto-save" className="w-[84px]">
          Auto save
        </label>
        <input aria-label="Auto save minutes" type="text" defaultValue="30" className={clsx(inputStyle, "w-[78px]")} />
        <span className="ml-2 w-[46px]">min</span>
        <label htmlFor="glb-password" className="w-[111px]">
          GLB password:
        </label>
        <input id="glb-password" type="password" className={clsx(inputStyle, "w-[97px]")} />
      </div>
      <FolderRow id="autosave-folder" label="Autosave folder:" className="mt-0.5" />
      <FolderRow id="template" label="Template for new:" className="mt-1.5" />
      <FolderRow id="manuals" label="Manuals folder:" warn className="mt-1.5" />
      <FolderRow id="resources" label="Resources folder:" warn className="mt-1.5" />
      <div className="mt-0.5 ml-[3px] grid grid-cols-[213px_213px] gap-x-[22px] gap-y-1">
        <button type="button" className={actionStyle}>
          Export settings
        </button>
        <button type="button" className={actionStyle}>
          Import settings
        </button>
        <div className="ml-1 flex items-center gap-2">
          <input
            id="disable-undo"
            type="checkbox"
            className="size-3 appearance-none border-2 border-t-[#3a2f22] border-l-[#3a2f22] border-r-[#ece5d6] border-b-[#ece5d6] bg-white"
          />
          <label htmlFor="disable-undo">Auto disable undo</label>
        </div>
        <button type="button" className={actionStyle}>
          Set as default application
        </button>
      </div>
    </form>
    <div className="absolute right-[11px] top-[6px]">
      <Leaf color="red" name="Close preferences" />
    </div>
  </Panel>
);

/* ---------- window chrome ---------- */

const AppIcon = ({ className }) => (
  <svg viewBox="0 0 24 20" className={className}>
    <rect width="24" height="20" rx="3" fill="#2c6038" />
    <path d="M2 17l6-8 4 4 7-10M4 4l7 3 4-3 5 7M14 17l3-6 4 5" fill="none" stroke="#8fb49a" strokeWidth="1.3" />
    <path d="M8 8l5-1 4 4-3 4-6-1z" fill="#5c9470" stroke="#c9dcc8" strokeWidth="0.8" />
  </svg>
);

const TitleBar = () => (
  <header className="flex h-[38px] shrink-0 items-center border-b border-[#c4bbb0] bg-linear-to-r from-[#f7f1ee] via-[#faf0ea] to-[#faefed] pl-[11px]">
    <AppIcon className="h-[18px] w-6" />
    <h1 className="ml-2 flex-1 pb-1 font-[Open_Sans,sans-serif] text-[17px] whitespace-pre text-[#111]">
      {"GSLayout 8.49588 [With beta tools] <64 bit> -  @ 48.01% - [Layout1 *]"}
    </h1>
    <div className="flex">
      <button type="button" aria-label="Minimize" className="flex h-9 w-[68px] items-center justify-center">
        <svg viewBox="0 0 16 16" className="size-4"><path d="M0 8h15" stroke="#111" /></svg>
      </button>
      <button type="button" aria-label="Maximize" className="flex h-9 w-[68px] items-center justify-center">
        <svg viewBox="0 0 16 16" className="size-4"><rect x="1" y="2" width="14" height="12" rx="1" fill="none" stroke="#111" strokeWidth="1.5" /></svg>
      </button>
      <button type="button" aria-label="Close" className="flex h-9 w-[68px] items-center justify-center">
        <svg viewBox="0 0 16 16" className="size-4"><path d="M1 2l14 12M15 2L1 14" stroke="#111" strokeWidth="1.3" /></svg>
      </button>
    </div>
  </header>
);

const MenuBar = () => (
  <nav className="flex h-6 shrink-0 items-center border-b-2 border-[#f6f2ea] bg-[#e8e0cd] pl-[6px]">
    <AppIcon className="h-5 w-[23px]" />
    <ul className="ml-3 flex flex-1 gap-[26px]">
      {MENUS.map((menu) => (
        <li key={menu}>
          <button type="button" className="block w-[35px] text-left font-[Noto_Sans_CJK_SC,sans-serif] text-[17px] leading-[22px] whitespace-nowrap text-[#111]">
            {menu}
          </button>
        </li>
      ))}
    </ul>
    <div className="flex gap-1">
      {[
        { name: "Minimize document", d: "M7 14h9v-2H7z" },
        { name: "Restore document", d: "M9 4h9v7h-3v-2h1V7h-5v1H9zM6 9h8v7H6zM8 11v3h4v-3z" },
        { name: "Close document", d: "M7 5h3l2 3 2-3h3l-3 5 3 5h-3l-2-3-2 3H7l3-5z" },
      ].map(({ name, d }) => (
        <button key={name} type="button" aria-label={name} className="h-5 w-6 bg-white">
          <svg viewBox="0 0 24 20" className="h-full w-full">
            <path d={d} fill="#7288a4" fillRule="evenodd" />
          </svg>
        </button>
      ))}
    </div>
  </nav>
);

const readoutStyle =
  "flex h-6 w-20 items-center justify-center border-2 border-t-[#3c3528] border-l-[#3c3528] border-r-[#efe9db] border-b-[#efe9db]";

const Toolbar = () => (
  <div className="flex h-[42px] shrink-0 items-center bg-linear-to-b from-[#d4c9ab] via-[#ebe3d1] to-[#d3c7a7] pl-[5px]">
    <GripX />
    <div className="ml-1.5 grid w-[806px] grid-cols-17">
      {TOOLBAR.map((item) => (
        <ToolbarButton key={item.name} {...item} />
      ))}
    </div>
    <span className="ml-2 flex">
      <GripX />
    </span>
    <div className="ml-[7px] grid w-[282px] grid-cols-6">
      {ZOOMS.map((item) => (
        <ToolbarButton key={item.name} {...item} />
      ))}
    </div>
    <output className={clsx(readoutStyle, "ml-2.5 font-[Liberation_Serif,serif] text-base font-bold text-[#222]")}>48.01%</output>
    <output className={clsx(readoutStyle, "ml-[15px]")} />
  </div>
);

const GripY = () => (
  <span className="mx-auto block h-1 w-10 rounded-full border border-[#f6f1e4] bg-[#e6dec8]" />
);

const Sidebar = () => (
  <aside className="w-[49px] shrink-0 bg-linear-to-b from-[#d6ccb0] via-[#e4dbc6] via-65% to-[#d3c8a9] pt-1">
    <GripY />
    <div className="mt-[6px] grid h-[433px] grid-rows-11">
      {ALIGN.map((item) => (
        <SideButton key={item.name} {...item} />
      ))}
    </div>
    <div className="my-[6px]">
      <GripY />
    </div>
    <div className="grid h-[396px] grid-rows-10">
      {BOOLEAN.map((item) => (
        <SideButton key={item.name} {...item} />
      ))}
    </div>
  </aside>
);

const Arrow = ({ name, d, className }) => (
  <button type="button" aria-label={name} className={className}>
    <svg viewBox="0 0 12 12" className="size-3">
      <path d={d} fill="#a3a3a3" />
    </svg>
  </button>
);

const Workspace = () => (
  <main className="grid min-h-0 flex-1 grid-cols-[1fr_23px] grid-rows-[1fr_20px] border-[#808080] border-t-2 border-r-2 border-b-2 border-l-3">
    <div className="relative overflow-hidden bg-white">
      <div className="absolute left-[621px] top-[17px] h-[922px] w-[782px] border-2 border-[#4cf44c] pt-[242px] pl-[14px]">
        <div className="h-[364px] w-[758px] border-2 border-[#fa1414] px-[5px] py-[3px]">
          <PreferencesDialog />
        </div>
      </div>
      <ToolPalette />
      <PlatePanel />
    </div>
    <div className="flex flex-col items-center justify-between bg-[#eee] py-1">
      <Arrow name="Scroll up" d="M6 2l6 8H0z" />
      <Arrow name="Scroll down" d="M6 10L0 2h12z" />
    </div>
    <div className="flex items-center justify-between bg-[#eee] px-[6px]">
      <Arrow name="Scroll left" d="M1 6l9-6v12z" className="flex" />
      <Arrow name="Scroll right" d="M11 6L2 0v12z" className="flex" />
    </div>
    <div className="bg-[#eee]" />
  </main>
);

const StatusBar = () => (
  <footer className="mt-0.5 mb-px flex h-[21px] shrink-0 divide-x-2 divide-[#b5a684] border border-[#b5a684] bg-[#e8e0cd] text-[#333]">
    <span className="flex-1" />
    <span className="w-[145px]" />
    <span className="w-[140px]" />
    <span className="w-[108px] pl-1 leading-5">Mem: 11%</span>
    <span className="w-11 pl-2 leading-5">00</span>
    <span className="w-[46px]" />
    <span className="w-[57px]" />
    <span className="w-12" />
  </footer>
);

const Badge = () => (
  <div className="absolute right-[3px] bottom-0 flex items-center gap-1">
    <svg viewBox="0 0 36 34" className="h-[34px] w-9 drop-shadow-[0_0_1px_#fff]">
      <path
        d="M3 2c9 5 9 18 3 29M33 2c-9 5-9 18-3 29M9 15c4 4 14 4 18 0M13 31c1-10 1-10 5-10s4 0 5 10M18 21v9"
        fill="none"
        stroke="#e0443c"
        strokeWidth="3.5"
      />
    </svg>
    <div className="flex flex-col items-center [text-shadow:0_0_2px_#fff,0_0_2px_#fff]">
      <span className="font-[Noto_Sans_CJK_TC,sans-serif] text-[21px] leading-[28px] font-medium text-[#f5a63c]">華印社區</span>
      <span className="font-[Noto_Sans,sans-serif] text-[11px] leading-3 text-[#444]">www.52cnp.com</span>
    </div>
  </div>
);

const App = () => {
  return (
    <div className="relative flex min-h-screen flex-col overflow-hidden rounded-xl bg-[#d8cdb2] font-[Inter,sans-serif] text-[15px] leading-5">
      <Defs />
      <TitleBar />
      <MenuBar />
      <Toolbar />
      <div className="flex flex-1">
        <Sidebar />
        <div className="flex min-w-0 flex-1 flex-col">
          <Workspace />
          <StatusBar />
        </div>
      </div>
      <Badge />
    </div>
  );
};

export default App;
